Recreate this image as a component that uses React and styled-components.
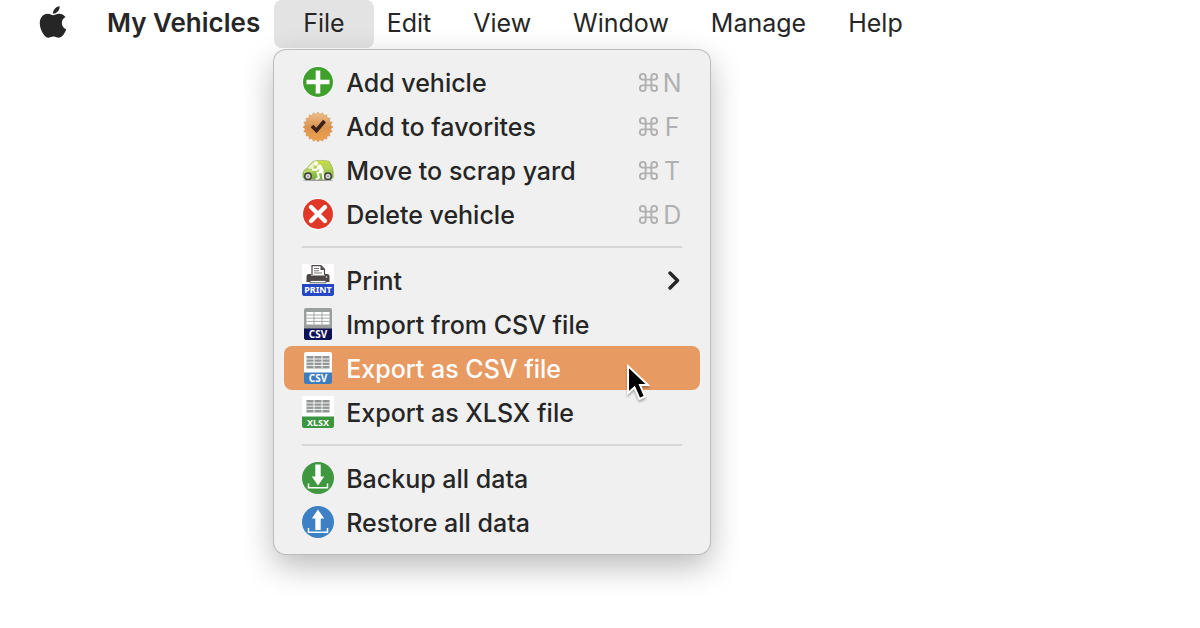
import React from 'react';
import styled, { createGlobalStyle } from 'styled-components';
import { FaApple } from 'react-icons/fa';
import { Command } from 'lucide-react';

const GlobalStyle = createGlobalStyle`
    body {
        margin: 0;
        background: #ffffff;
        font-family: Inter, "Liberation Sans", sans-serif;
        font-size: 25px;
        color: #262626;
    }
`

const Desktop = styled.div`
    min-height: 100vh;
    overflow: hidden;
`

const MenuBar = styled.nav`
    display: flex;
    align-items: center;
    height: 48px;
    padding-left: 35px;
`

const AppleButton = styled.button`
    display: flex;
    border: none;
    background: none;
    padding: 0;
    margin: 0 36px 4px 0;
    color: #262626;
`

const AppName = styled.span`
    font-weight: 600;
    font-size: 26px;
    line-height: 48px;
    margin-right: 22px;
    padding-bottom: 2px;
    white-space: nowrap;
`

const MenuList = styled.ul`
    display: flex;
    list-style: none;
    margin: 0;
    padding: 0;
`

const MenuEntry = styled.li`
    position: relative;
`

const MenuTitle = styled.button`
    position: relative;
    z-index: 0;
    display: block;
    height: 48px;
    padding: 0 21px 2px;
    border: none;
    background: none;
    font: inherit;
    color: inherit;
    &::before {
        content: "";
        position: absolute;
        z-index: -1;
        inset: 0 -8px;
        border-radius: 8px;
        background: ${props => props.$open ? '#e3e3e3' : 'transparent'};
    }
`

const Dropdown = styled.div`
    position: absolute;
    z-index: 1;
    top: 50px;
    left: -8px;
    width: 436px;
    box-sizing: border-box;
    padding: 10px;
    border-radius: 12px;
    background: #f0f0f0;
    box-shadow: 0 0 0 1px #bcbcbc, 0 12px 32px rgba(0, 0, 0, 0.28);
`

const MenuItem = styled.button`
    position: relative;
    display: flex;
    align-items: center;
    gap: 12px;
    width: 100%;
    height: 44px;
    padding: 0 18px;
    border: none;
    border-radius: 8px;
    background: ${props => props.$active ? '#e89a63' : 'transparent'};
    color: ${props => props.$active ? '#ffffff' : '#262626'};
    font: inherit;
    font-weight: ${props => props.$active ? 500 : 450};
    text-align: left;
    white-space: nowrap;
`

const ItemLabel = styled.span`
    flex: 1;
    padding-top: 2px;
`

const Shortcut = styled.kbd`
    display: flex;
    align-items: center;
    gap: 2px;
    font: inherit;
    font-weight: 400;
    color: #b0b0b0;
`

const ShortcutKey = styled.span`
    width: 20px;
    padding-top: 2px;
    text-align: center;
`

const Separator = styled.hr`
    height: 2px;
    margin: 10px 18px;
    border: none;
    background: #d6d6d6;
`

const Icon = styled.svg`
    flex: none;
    width: 32px;
    height: 32px;
`

const Chevron = styled.svg`
    width: 16px;
    height: 20px;
`

const Pointer = styled.svg`
    position: absolute;
    z-index: 2;
    top: 17px;
    left: 341px;
    width: 28px;
    height: 42px;
    filter: drop-shadow(0 2px 1px rgba(0, 0, 0, 0.3));
`

const AddIcon = () => (
    <Icon viewBox="0 0 32 32">
        <circle cx="16" cy="16" r="15.8" fill="#fff"/>
        <circle cx="16" cy="16" r="15" fill="#3fa02c"/>
        <path d="M16 4.500v23M4.500 16h23" stroke="#fff" strokeWidth="4.6"/>
    </Icon>
)

// 20 teeth around the badge
const teeth = Array.from({ length: 40 }, (_, i) => {
    const r = i % 2 ? 12.8 : 15;
    const a = (i * Math.PI) / 20;
    return `${16 + r * Math.sin(a)},${17 - r * Math.cos(a)}`;
}).join(' ');

const FavoriteIcon = () => (
    <Icon viewBox="0 0 32 32">
        <defs>
            <linearGradient id="badge" x1="0" y1="0" x2="0" y2="1">
                <stop offset="0" stopColor="#eec08e"/>
                <stop offset="0.5" stopColor="#d9934f"/>
                <stop offset="1" stopColor="#f0a24c"/>
            </linearGradient>
        </defs>
        <polygon points={teeth} fill="url(#badge)" stroke="#cf9355" strokeWidth="0.5" strokeLinejoin="round"/>
        <path d="M10 16l4.500 4.500L22.500 11" fill="none" stroke="#3b2417" strokeWidth="3.8"/>
    </Icon>
)

const CarIcon = () => (
    <Icon viewBox="0 0 32 32">
        <defs>
            <linearGradient id="car" x1="0" y1="0" x2="0" y2="1">
                <stop offset="0" stopColor="#d3de45"/>
                <stop offset="0.5" stopColor="#a9cd52"/>
                <stop offset="1" stopColor="#78b03a"/>
            </linearGradient>
        </defs>
        <ellipse cx="16" cy="26.200" rx="15" ry="0.900" fill="#9c9c9c"/>
        <path d="M1 23.500C.5 18.500 1.500 16 5 14.300 7.500 11 9.500 8 12.500 7c4-.9 10-.8 14.500.2 2.300 3.300 4 7.300 4.200 10.800v5.500l-2 1.700H3z" fill="url(#car)" stroke="#86aa48" strokeWidth="0.600"/>
        <path d="M5.500 14.500C8 11.500 9.500 9.500 12 8.500l-.5 6.500z" fill="#eef4d5"/>
        <path d="M2 18.500c3-1.800 6-2 9.500-1.500" stroke="#d8e99b" strokeWidth="1" fill="none"/>
        <path d="M20.500 9h6l2.300 6-6.300-.5z" fill="#b9d551"/>
        <g stroke="#fff" strokeLinecap="round" strokeLinejoin="round" fill="none">
            <path d="M17.500 12.500l2.200 4.500" strokeWidth="4"/>
            <path d="M16.500 12.500L14.500 16l-3.500-.5M19.500 18l-4 .8 1.500 5-2.500 1M20.500 18l.8 6.500" strokeWidth="1.900"/>
        </g>
        <circle cx="13.800" cy="9.500" r="2.200" fill="#fff"/>
        <circle cx="6" cy="22.200" r="3.900" fill="#3a3a3a"/>
        <circle cx="6" cy="22.200" r="2.500" fill="#d6d6d6"/>
        <circle cx="6" cy="22.200" r="0.800" fill="#777"/>
        <circle cx="26" cy="22.200" r="3.900" fill="#3a3a3a"/>
        <circle cx="26" cy="22.200" r="2.500" fill="#d6d6d6"/>
        <circle cx="26" cy="22.200" r="0.800" fill="#777"/>
    </Icon>
)

const DeleteIcon = () => (
    <Icon viewBox="0 0 32 32">
        <circle cx="16" cy="16" r="15.8" fill="#fff"/>
        <circle cx="16" cy="16" r="15" fill="#df3826"/>
        <path d="M9 9l14 14M23 9L9 23" stroke="#fff" strokeWidth="4.400" strokeLinecap="round"/>
    </Icon>
)

const PrintIcon = () => (
    <Icon viewBox="0 0 32 32">
        <rect width="32" height="32" fill="#fff"/>
        <path d="M10 11V1.700h9l3.500 3.500V11" fill="#fff" stroke="#4d4747" strokeWidth="1.200"/>
        <path d="M18.500 1.500V6h4" fill="#4d4747"/>
        <path d="M12 4.500h5M12 6.800h5M12 9h8" stroke="#77706f" strokeWidth="1"/>
        <path d="M7 10h2v1.500h14V10h2q2.500 0 2.500 2.500V18h-4v-2H8.500v2h-4v-5.500Q4.500 10 7 10z" fill="#4d4747"/>
        <path d="M8 16.500h16v2.300H8z" fill="#fff" stroke="#4d4747" strokeWidth="0.900"/>
        <circle cx="24.500" cy="13" r="0.800" fill="#fff"/>
        <path d="M0 20h32v10q0 2-2 2H2q-2 0-2-2z" fill="#2447c4"/>
        <text x="16" y="29.300" textAnchor="middle" fontFamily="Noto Sans, sans-serif" fontSize="9" fontWeight="700" fill="#fff">PRINT</text>
    </Icon>
)

const SheetIcon = ({ label, color, wide, frame, line, cell }) => {
    const x = wide ? 0 : 2;
    return (
        <Icon viewBox="0 0 32 32">
            <path d={`M${x} 30V${wide ? 0 : 2}q0-2 2-2H${30 - x}q2 0 2 2V30z`} fill={frame}/>
            <rect x="4.500" y="4" width="23" height="12.500" fill={cell}/>
            <path d="M4.500 7h23M4.500 10.200h23M4.500 13.400h23M12 4v12.500M20 4v12.500" stroke={line} strokeWidth="0.900"/>
            <path d={`M${x} 20.500h${32 - 2 * x}V30q0 2-2 2H${x + 2}q-2 0-2-2z`} fill={color}/>
            <text x="16" y="29.600" textAnchor="middle" fontFamily="Noto Sans, sans-serif" fontSize={wide ? 9 : 10} fontWeight="700" fill="#fff">{label}</text>
        </Icon>
    )
}

const BackupIcon = () => (
    <Icon viewBox="0 0 32 32">
        <circle cx="16" cy="16" r="16" fill="#3f9840"/>
        <path d="M13.300 2.500h5.400v12h3.500L16 23.500l-6.200-9h3.500z" fill="#fff"/>
        <path d="M6.500 21.500v4.300h19v-4.300" fill="none" stroke="#fff" strokeWidth="1.500"/>
    </Icon>
)

const RestoreIcon = () => (
    <Icon viewBox="0 0 32 32">
        <circle cx="16" cy="16" r="16" fill="#3d80c4"/>
        <path d="M16 3.500l6.200 9h-3.500v11.500h-5.400V12.500H9.800z" fill="#fff"/>
        <path d="M6.500 22v4.300h19V22" fill="none" stroke="#fff" strokeWidth="1.500"/>
    </Icon>
)

const groups = [
    [
        { label: 'Add vehicle', icon: <AddIcon/>, shortcut: 'N' },
        { label: 'Add to favorites', icon: <FavoriteIcon/>, shortcut: 'F' },
        { label: 'Move to scrap yard', icon: <CarIcon/>, shortcut: 'T' },
        { label: 'Delete vehicle', icon: <DeleteIcon/>, shortcut: 'D' },
    ],
    [
        { label: 'Print', icon: <PrintIcon/>, submenu: true },
        { label: 'Import from CSV file', icon: <SheetIcon label="CSV" color="#0d1257" frame="#9a9e9d" line="#9a9e9d" cell="#fff"/> },
        { label: 'Export as CSV file', icon: <SheetIcon label="CSV" color="#3c7dbf" frame="#fff" line="#fff" cell="#929595"/>, active: true },
        { label: 'Export as XLSX file', icon: <SheetIcon wide label="XLSX" color="#3b963f" frame="#fff" line="#fff" cell="#929595"/> },
    ],
    [
        { label: 'Backup all data', icon: <BackupIcon/> },
        { label: 'Restore all data', icon: <RestoreIcon/> },
    ],
]

const FileMenu = () => (
    <Dropdown role="menu" aria-label="File">
        {groups.map((group, index) => (
            <React.Fragment key={index}>
                {index > 0 && <Separator/>}
                {group.map(item => (
                    <MenuItem key={item.label} type="button" role="menuitem" $active={item.active}>
                        {item.icon}
                        <ItemLabel>{item.label}</ItemLabel>
                        {item.shortcut && (
                            <Shortcut>
                                <Command size={23} strokeWidth={2}/>
                                <ShortcutKey>{item.shortcut}</ShortcutKey>
                            </Shortcut>
                        )}
                        {item.submenu && (
                            <Chevron viewBox="0 0 16 20" fill="none" stroke="#262626" strokeWidth="3.4" strokeLinecap="round" strokeLinejoin="round">
                                <path d="M4 3l7.500 7.500L4 18"/>
                            </Chevron>
                        )}
                        {item.active && (
                            <Pointer viewBox="0 0 28 42">
                                <path d="M3 3v27l6.500-5.500 5 11.500 5.500-2.500-5-11.500H23z" fill="#000" stroke="#fff" strokeWidth="2"/>
                            </Pointer>
                        )}
                    </MenuItem>
                ))}
            </React.Fragment>
        ))}
    </Dropdown>
)

const App = () => {
    return (
        <Desktop>
            <GlobalStyle/>
            <MenuBar>
                <AppleButton type="button" aria-label="Apple">
                    <FaApple size={36}/>
                </AppleButton>
                <AppName>My Vehicles</AppName>
                <MenuList>
                    {['File', 'Edit', 'View', 'Window', 'Manage', 'Help'].map(title => (
                        <MenuEntry key={title}>
                            <MenuTitle type="button" $open={title === 'File'}>{title}</MenuTitle>
                            {title === 'File' && <FileMenu/>}
                        </MenuEntry>
                    ))}
                </MenuList>
            </MenuBar>
        </Desktop>
    )};


export default App;
